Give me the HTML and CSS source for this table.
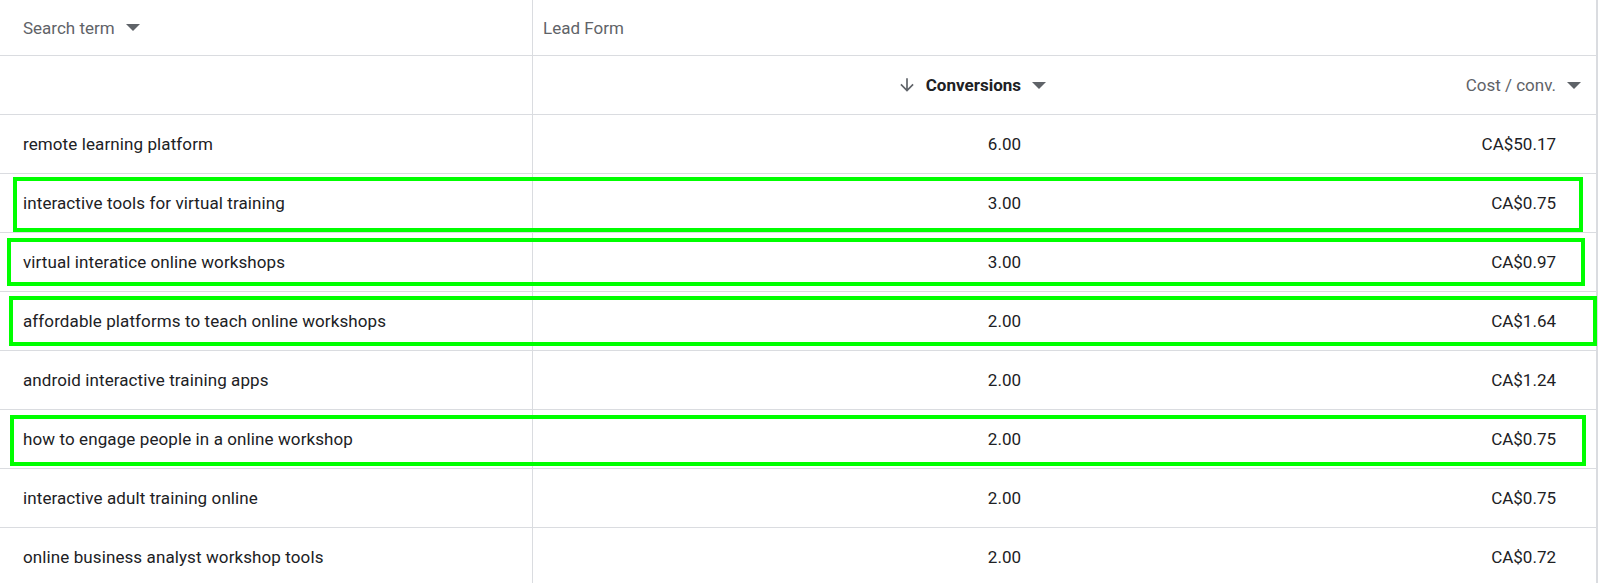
FILE: index.html
```html
<!DOCTYPE html>
<html lang="en">
<head>
<meta charset="utf-8">
<title>Search terms</title>
<link rel="stylesheet" href="styles.css">
</head>
<body>
<div class="table">
  <div class="row head1">
    <div class="cell c1 hcell">Search term<span class="tri"></span></div>
    <div class="cell group">Lead Form</div>
  </div>
  <div class="row head2">
    <div class="cell c1"></div>
    <div class="cell c2 hnum sorted">
      <svg class="sort-icon" viewBox="0 0 24 24" width="20" height="20"><path d="M20 12l-1.41-1.41L13 16.17V4h-2v12.17l-5.58-5.59L4 12l8 8 8-8z" fill="#5f6368"/></svg>
      <span class="bold">Conversions</span><span class="tri"></span>
    </div>
    <div class="cell c3 hnum">Cost / conv.<span class="tri"></span></div>
  </div>
  <div class="row data"><div class="cell c1 term">remote learning platform</div><div class="cell c2 num">6.00</div><div class="cell c3 num">CA$50.17</div></div>
  <div class="row data"><div class="cell c1 term">interactive tools for virtual training</div><div class="cell c2 num">3.00</div><div class="cell c3 num">CA$0.75</div></div>
  <div class="row data"><div class="cell c1 term">virtual interatice online workshops</div><div class="cell c2 num">3.00</div><div class="cell c3 num">CA$0.97</div></div>
  <div class="row data"><div class="cell c1 term">affordable platforms to teach online workshops</div><div class="cell c2 num">2.00</div><div class="cell c3 num">CA$1.64</div></div>
  <div class="row data"><div class="cell c1 term">android interactive training apps</div><div class="cell c2 num">2.00</div><div class="cell c3 num">CA$1.24</div></div>
  <div class="row data"><div class="cell c1 term">how to engage people in a online workshop</div><div class="cell c2 num">2.00</div><div class="cell c3 num">CA$0.75</div></div>
  <div class="row data"><div class="cell c1 term">interactive adult training online</div><div class="cell c2 num">2.00</div><div class="cell c3 num">CA$0.75</div></div>
  <div class="row data"><div class="cell c1 term">online business analyst workshop tools</div><div class="cell c2 num">2.00</div><div class="cell c3 num">CA$0.72</div></div>

  <div class="mark mark1"></div>
  <div class="mark mark2"></div>
  <div class="mark mark3"></div>
  <div class="mark mark4"></div>
</div>
</body>
</html>
```

FILE: styles.css
```css
html, body {
  margin: 0;
  padding: 0;
  background: #ffffff;
}
body {
  font-family: Roboto, "Liberation Sans", Arial, sans-serif;
  font-size: 17px;
  color: #202124;
  overflow: hidden;
}
.table {
  position: relative;
  width: 1596px;
  border-right: 2px solid #dadce0;
}
.row {
  display: grid;
  grid-template-columns: 533px 517px 1fr;
  border-bottom: 1px solid #dadce0;
  box-sizing: border-box;
}
.head1 {
  height: 56px;
  grid-template-columns: 533px 1fr;
}
.head2 { height: 59px; }
.data { height: 59px; }
.cell {
  display: flex;
  align-items: center;
  box-sizing: border-box;
  min-width: 0;
  white-space: nowrap;
}
.c1 {
  border-right: 1px solid #dadce0;
  padding-left: 23px;
}
.term {
  letter-spacing: 0.1px;
}
.hcell, .group {
  color: #5f6368;
}
.group {
  padding-left: 10px;
}
.hnum {
  justify-content: flex-end;
  color: #5f6368;
}
.c2.hnum { padding-right: 4px; }
.c3.hnum { padding-right: 15px; }
.bold {
  font-weight: 700;
  color: #202124;
}
.sort-icon {
  margin-right: 9px;
  flex: none;
}
.tri {
  display: inline-block;
  width: 0;
  height: 0;
  margin-left: 11px;
  border-left: 7px solid transparent;
  border-right: 7px solid transparent;
  border-top: 7px solid #5f6368;
}
.num { justify-content: flex-end; }
.c2.num { padding-right: 29px; }
.c3.num { padding-right: 40px; }

.mark {
  position: absolute;
  box-sizing: border-box;
  border: 4px solid #00ff00;
  pointer-events: none;
}
.mark1 { left: 13px; top: 177px; width: 1570px; height: 55px; }
.mark2 { left: 7px; top: 238px; width: 1578px; height: 48px; }
.mark3 { left: 9px; top: 296px; width: 1588px; height: 50px; }
.mark4 { left: 10px; top: 415px; width: 1576px; height: 51px; }
```
